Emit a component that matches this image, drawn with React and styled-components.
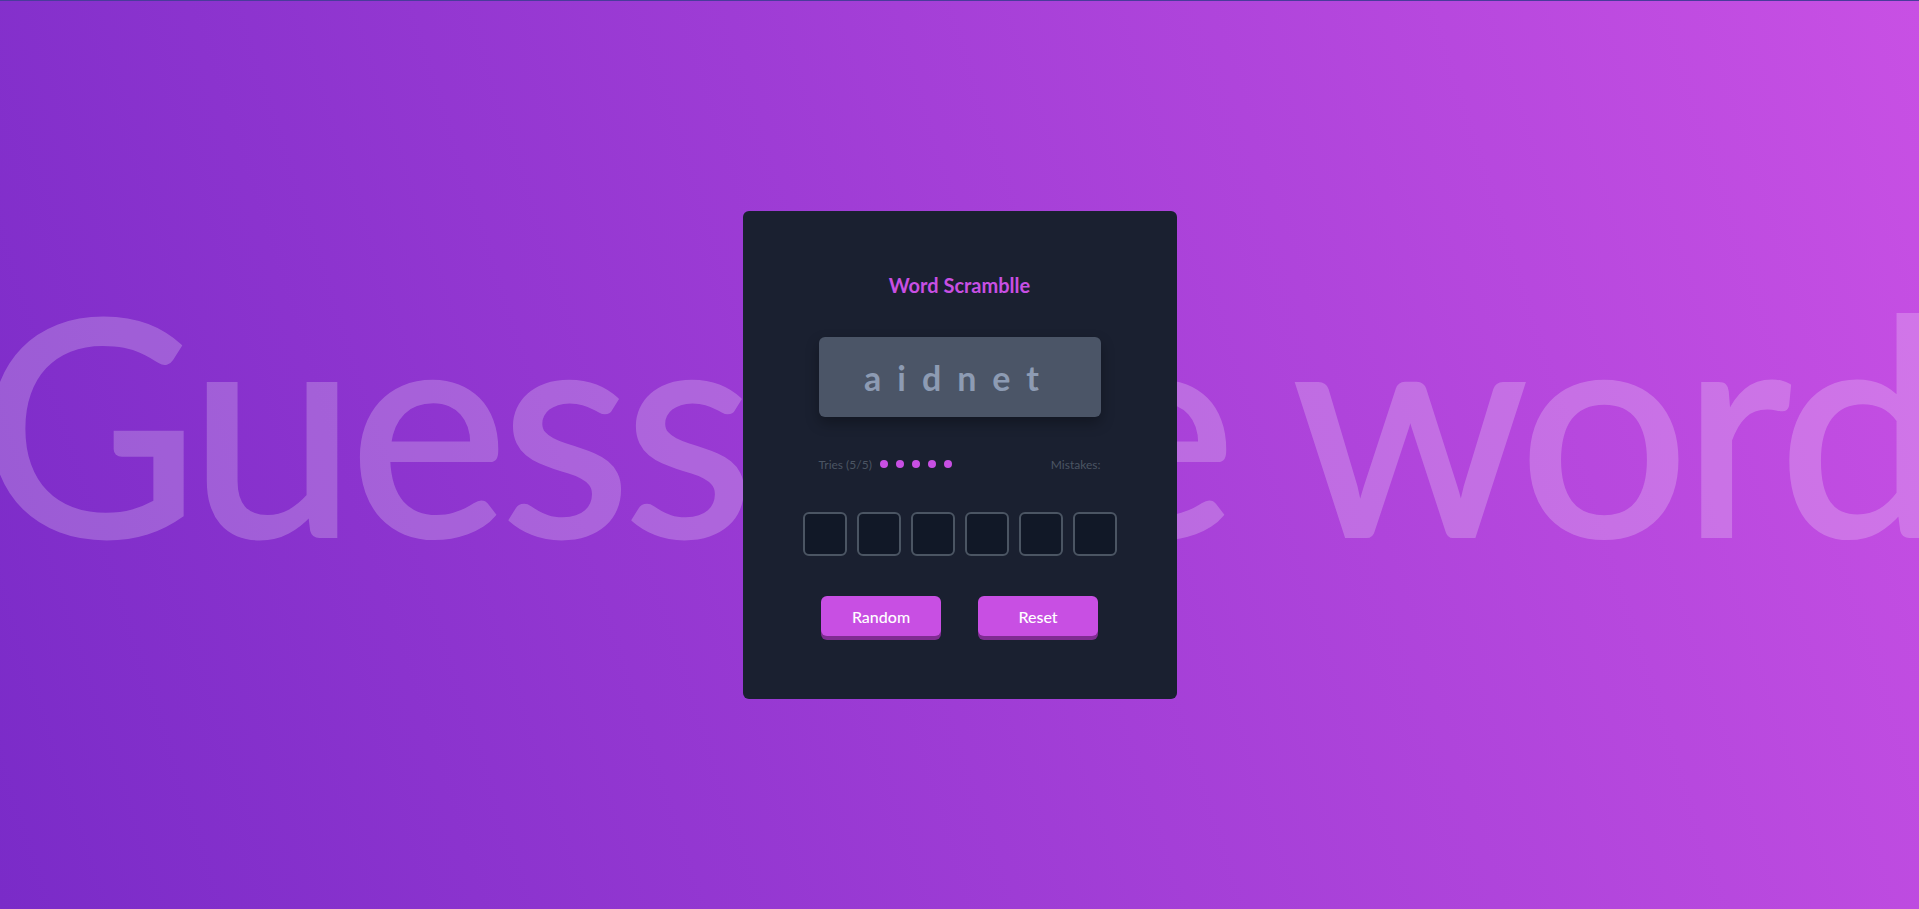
import React from 'react';
import styled, { createGlobalStyle } from 'styled-components';

const GlobalStyle = createGlobalStyle`
    html, body {
        margin: 0;
        padding: 0;
    }
    body {
        font-family: Lato, "Open Sans", sans-serif;
    }
`;

const Page = styled.main`
    width: 100%;
    height: 909px;
    box-sizing: border-box;
    border-top: 1px solid #4a3b9b;
    overflow: hidden;
    display: grid;
    grid-template-columns: minmax(0, 1fr);
    grid-template-rows: minmax(0, 1fr);
    place-items: center;
    background: linear-gradient(72deg, #7a2bc8 0%, #c850e4 100%);
`;

const Backdrop = styled.h1`
    grid-area: 1 / 1;
    justify-self: center;
    width: max-content;
    margin: 0 0 70px;
    font-family: Lato, sans-serif;
    font-size: 300px;
    font-weight: 400;
    letter-spacing: -7px;
    line-height: 1;
    white-space: nowrap;
    color: #fff;
    -webkit-text-stroke: 4px #fff;
    opacity: 0.22;
    user-select: none;
`;

const Card = styled.section`
    grid-area: 1 / 1;
    z-index: 1;
    width: 434px;
    height: 488px;
    box-sizing: border-box;
    padding: 60px 0 0;
    background: #1a2030;
    border-radius: 6px;
    display: flex;
    flex-direction: column;
    align-items: center;
`;

const Title = styled.h2`
    margin: 0 0 38px;
    font-size: 20px;
    line-height: 28px;
    font-weight: 700;
    color: #c84fe3;
`;

const Scrambled = styled.div`
    width: 282px;
    height: 80px;
    border-radius: 6px;
    background: #4b5567;
    box-shadow: 0 6px 14px rgba(0, 0, 0, 0.3);
    display: flex;
    align-items: center;
    justify-content: center;
    box-sizing: border-box;
    font-size: 34px;
    font-weight: 700;
    letter-spacing: 16px;
    color: #8d9bb3;
`;

const Stats = styled.div`
    width: 282px;
    margin-top: 39px;
    height: 16px;
    display: flex;
    align-items: center;
    justify-content: space-between;
    font-size: 12px;
    color: #4b5563;
`;

const Tries = styled.div`
    display: flex;
    align-items: center;
    gap: 8px;
`;

const Dots = styled.div`
    display: flex;
    gap: 8px;
`;

const Dot = styled.span`
    width: 8px;
    height: 8px;
    border-radius: 50%;
    background: ${({ $used }) => ($used ? '#4b5563' : '#c84fe3')};
`;

const Slots = styled.div`
    margin-top: 40px;
    display: flex;
    gap: 10px;
`;

const Slot = styled.input`
    width: 44px;
    height: 44px;
    box-sizing: border-box;
    border: 2px solid #4b5563;
    border-radius: 6px;
    background: #111827;
    color: #fff;
    text-align: center;
    font-size: 20px;
    outline: none;
`;

const Actions = styled.div`
    margin-top: 40px;
    display: flex;
    gap: 37px;
`;

const Button = styled.button`
    width: 120px;
    height: 40px;
    border: none;
    border-radius: 6px;
    background: #c84fe3;
    box-shadow: 0 4px 0 #7f2c92;
    color: #fff;
    font-family: Lato, sans-serif;
    font-size: 16px;
    font-weight: 500;
    cursor: pointer;
`;

function App() {
    const word = 'aidnet';
    return (
        <Page>
            <GlobalStyle />
            <Backdrop>Guess the word</Backdrop>
            <Card>
                <Title>Word Scramblle</Title>
                <Scrambled>{word}</Scrambled>
                <Stats>
                    <Tries>
                        <span>Tries (5/5)</span>
                        <Dots>
                            {[0, 1, 2, 3, 4].map(i => <Dot key={i} />)}
                        </Dots>
                    </Tries>
                    <span>Mistakes:</span>
                </Stats>
                <Slots>
                    {word.split('').map((_, i) => <Slot key={i} maxLength={1} />)}
                </Slots>
                <Actions>
                    <Button>Random</Button>
                    <Button>Reset</Button>
                </Actions>
            </Card>
        </Page>
    )
}

export default App
